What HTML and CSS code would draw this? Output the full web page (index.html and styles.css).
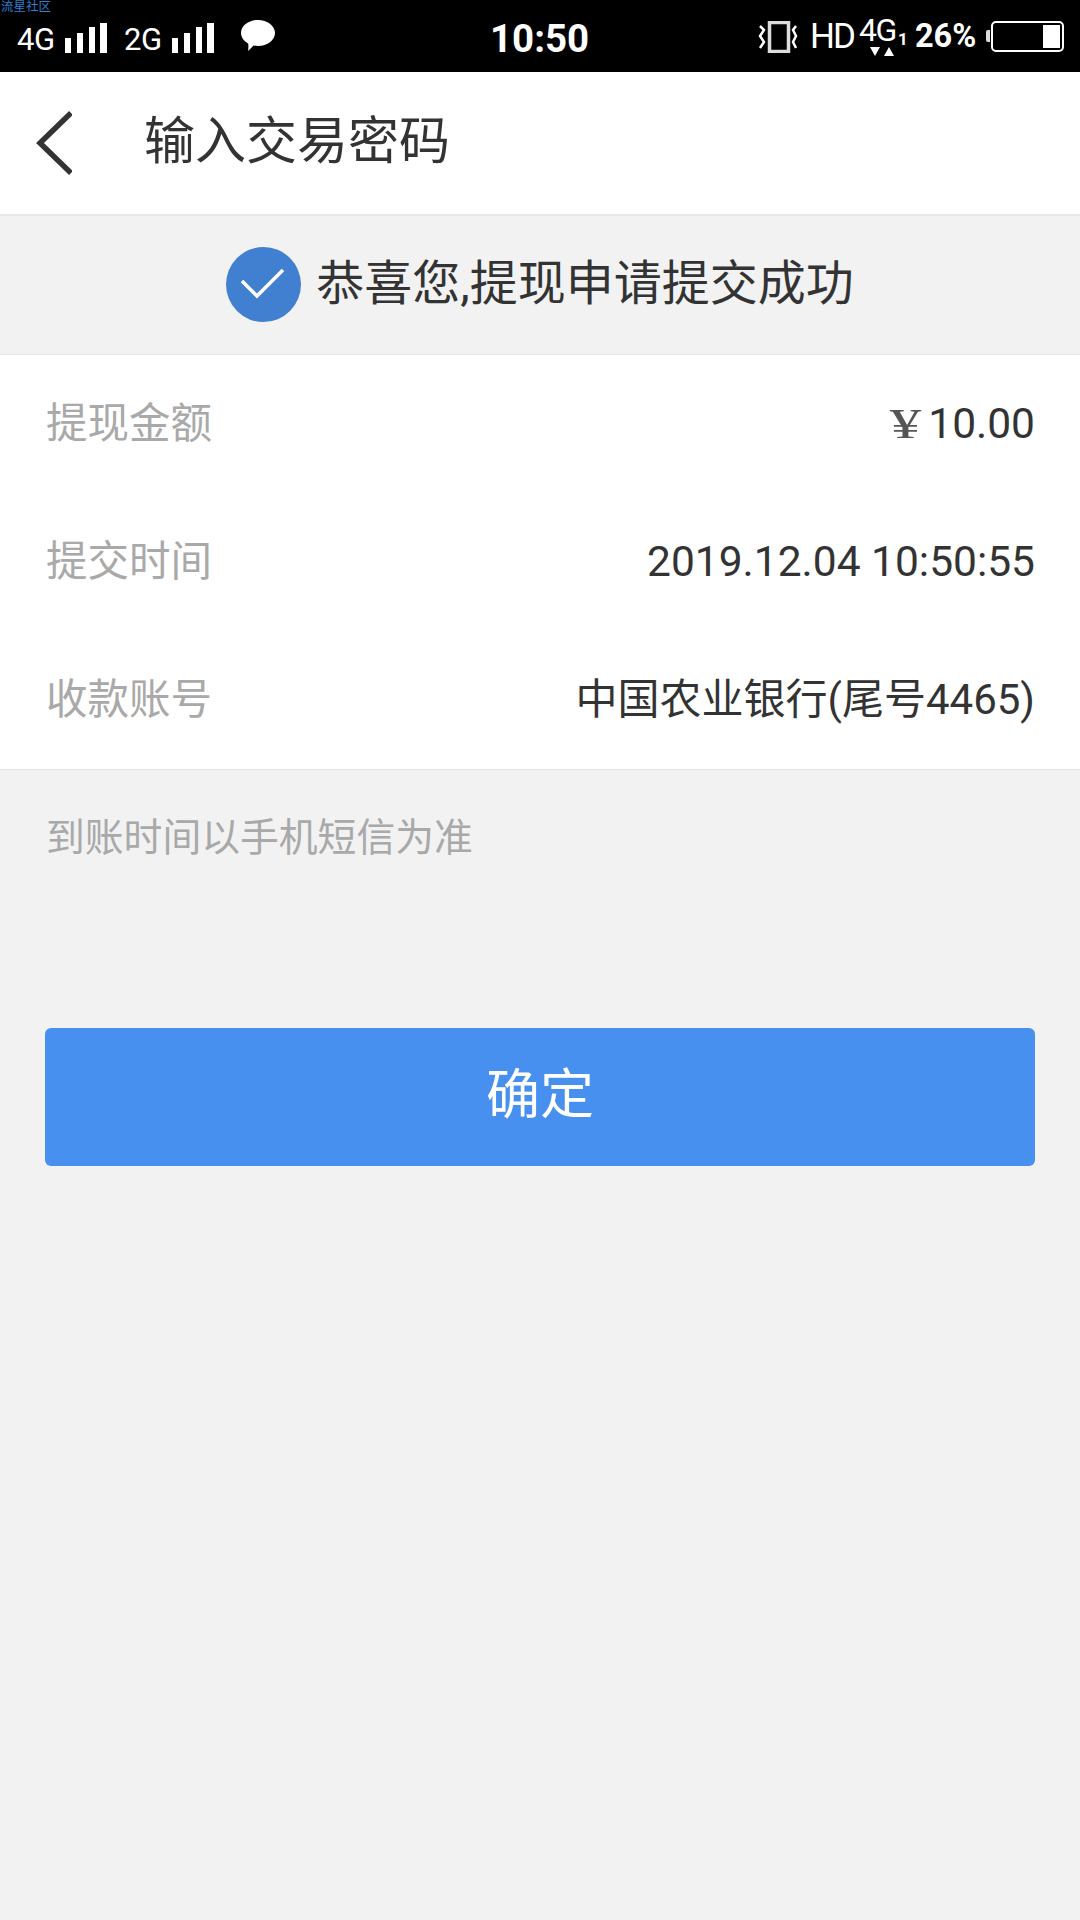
FILE: index.html
```html
<!DOCTYPE html>
<html lang="zh-CN">
<head>
<meta charset="utf-8">
<title>输入交易密码</title>
<link rel="stylesheet" href="styles.css">
</head>
<body>
<div class="page">
  <header class="status">
    <span class="mark">流星社区</span>
    <div class="status-left">
      <span class="net">4G</span>
      <svg class="bars" width="42" height="30" viewBox="0 0 42 30"><path d="M0 15h6v15H0zM12 10h6v20h-6zM24 4h6v26h-6zM35 0h7v30h-7z" fill="#fff"/></svg>
      <span class="net net-two">2G</span>
      <svg class="bars" width="42" height="30" viewBox="0 0 42 30"><path d="M0 15h6v15H0zM12 10h6v20h-6zM24 4h6v26h-6zM35 0h7v30h-7z" fill="#fff"/></svg>
      <svg class="bubble" width="34" height="32" viewBox="0 0 34 32"><path d="M17 0c9.400 0 17 5.800 17 13s-7.600 13-17 13c-1.600 0-3.200-.2-4.600-.5C10.500 28 7.500 30.500 7 31c.4-2 .6-4.200.2-7.500C2.800 21 0 17.300 0 13 0 5.800 7.600 0 17 0z" fill="#fff"/></svg>
    </div>
    <div class="clock">10:50</div>
    <div class="status-right">
      <svg class="vibrate" width="40" height="32" viewBox="0 0 40 32"><rect x="11.500" y="1.500" width="19" height="29" fill="none" stroke="#ddd" stroke-width="3.500"/><path d="M2 5l4 4-4 6 4 6-4 6M38 5l-3 4 3 6-3 6 3 6" fill="none" stroke="#fff" stroke-width="2.500"/></svg>
      <span class="hd">HD</span>
      <div class="lte">
        <span class="lte-text">4G</span>
        <svg class="arrows" width="24" height="9" viewBox="0 0 24 9"><path d="M0 0h10L5 9zM14 9h10L19 0z" fill="#fff"/></svg>
      </div>
      <span class="sim">1</span>
      <span class="pct">26%</span>
      <span class="nub"></span>
      <div class="battery"><span class="level"></span></div>
    </div>
  </header>

  <nav class="nav">
    <svg class="back" width="36" height="64" viewBox="0 0 36 64"><path d="M35 2L4 32l31 30" fill="none" stroke="#333" stroke-width="5.500"/></svg>
    <h1 class="nav-title">输入交易密码</h1>
  </nav>

  <section class="banner">
    <svg class="ok" width="75" height="75" viewBox="0 0 75 75"><circle cx="37.500" cy="37.500" r="37.500" fill="#417fd0"/><path d="M16 34l15 15 26-26" fill="none" stroke="#fff" stroke-width="3.500"/></svg>
    <span class="banner-text">恭喜您,提现申请提交成功</span>
  </section>

  <section class="card">
    <div class="row"><span class="label">提现金额</span><span class="value"><span class="yen">¥</span>10.00</span></div>
    <div class="row"><span class="label">提交时间</span><span class="value">2019.12.04 10:50:55</span></div>
    <div class="row"><span class="label">收款账号</span><span class="value value-cjk">中国农业银行(尾号4465)</span></div>
  </section>

  <p class="note">到账时间以手机短信为准</p>

  <button class="confirm" type="button"><span class="confirm-text">确定</span></button>
</div>
</body>
</html>
```

FILE: styles.css
```css
* { box-sizing: border-box; }
html, body { margin: 0; padding: 0; }
body {
  width: 1080px;
  height: 1920px;
  overflow: hidden;
  background: #f2f2f3;
  font-family: Roboto, "Noto Sans CJK SC", sans-serif;
  color: #333;
}
.page { width: 1080px; height: 1920px; display: flex; flex-direction: column; }

.status {
  position: relative;
  height: 72px;
  background: #000;
  color: #fff;
  display: flex;
  align-items: center;
  flex: none;
}
.mark {
  position: absolute;
  left: 1px;
  top: 0;
  font-size: 12.500px;
  line-height: 14px;
  color: #2f7fd0;
}
.status-left {
  width: 490px;
  display: flex;
  align-items: center;
  padding-left: 17px;
}
.net { font-size: 31px; line-height: 36px; margin-top: 8px; font-weight: 400; letter-spacing: -.300px; }
.bars { margin-left: 10px; margin-top: 3px; }
.net-two { margin-left: 17px; }
.bubble { margin-left: 27px; margin-top: -1px; }
.clock { font-size: 38.500px; font-weight: 700; width: 98px; text-align: center; margin-top: 4px; }
.status-right {
  flex: 1;
  display: flex;
  align-items: center;
  padding-left: 170px;
}
.vibrate { flex: none; margin-top: 1px; }
.hd { font-size: 35px; font-weight: 400; margin-left: 12px; letter-spacing: -2px; }
.lte { position: relative; margin-left: 5px; width: 38px; height: 60px; }
.lte-text { position: absolute; left: 0; top: 8px; font-size: 32px; line-height: 32px; font-weight: 400; letter-spacing: -1.500px; }
.arrows { position: absolute; left: 11px; top: 41px; }
.sim { font-size: 17px; font-weight: 700; margin-left: 1px; margin-top: 6px; width: 10px; }
.pct { font-size: 32.500px; font-weight: 700; margin-left: 7px; }
.nub { width: 4px; height: 12px; background: #ddd; border-radius: 2px 0 0 2px; margin-left: 10px; }
.battery {
  width: 73px;
  height: 31px;
  border: 2px solid #fff;
  border-radius: 5px;
  margin-left: 1px;
  padding: 2px;
  display: flex;
  justify-content: flex-end;
}
.level { width: 17px; background: #fff; }

.nav {
  height: 144px;
  flex: none;
  background: #fff;
  border-bottom: 2px solid #e8e8e8;
  display: flex;
  align-items: center;
  padding-left: 36px;
}
.back { flex: none; }
.nav-title { margin: 0 0 2px 72px; font-size: 51px; font-weight: 400; line-height: 60px; letter-spacing: 0; }

.banner {
  height: 138px;
  flex: none;
  display: flex;
  align-items: center;
  justify-content: center;
  gap: 15px;
  padding-bottom: 2px;
}
.ok { flex: none; }
.banner-text { font-size: 48px; padding-bottom: 10px; }

.card {
  flex: none;
  background: #fff;
  border-top: 1px solid #e5e5e5;
  border-bottom: 1px solid #e5e5e5;
  padding: 0 45px 0 46px;
}
.row {
  height: 138px;
  display: flex;
  align-items: center;
  justify-content: space-between;
}
.label { font-size: 41.500px; color: #a9a9a9; padding-bottom: 9px; }
.value { font-size: 42.500px; color: #333; padding-bottom: 2px; }
.value-cjk { font-size: 42px; padding-bottom: 9px; }
.yen {
  display: inline-block;
  font-family: "Liberation Serif", serif;
  font-size: 42px;
  width: 31px;
  margin-right: 7px;
  transform: scaleX(1.500);
  text-align: center;
  color: #555;
}

.note {
  margin: 44px 0 0 46px;
  font-size: 38.800px;
  line-height: 48px;
  color: #a9a9a9;
}
.confirm {
  display: block;
  margin: 166px 0 0 45px;
  width: 990px;
  height: 138px;
  border: 0;
  border-radius: 6px;
  background: #4890f0;
  color: #fff;
  font-family: inherit;
  font-size: 54px;
  padding: 0 0 13px;
}
.confirm-text { display: block; }
```
